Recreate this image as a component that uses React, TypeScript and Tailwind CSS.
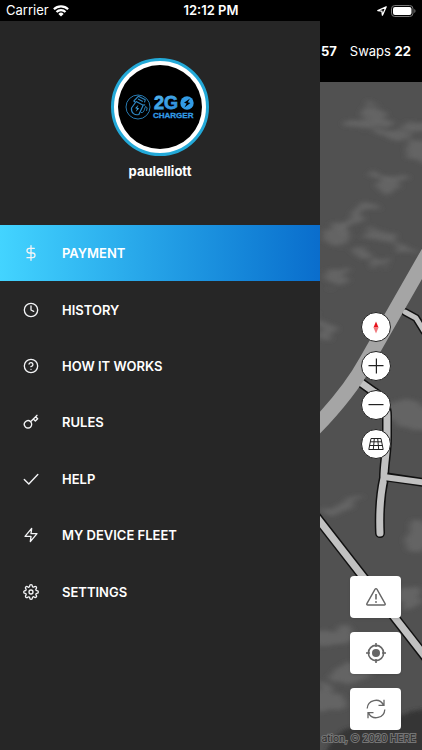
import type { ReactNode } from "react";
import {
  FiClock,
  FiDollarSign,
  FiHelpCircle,
  FiKey,
  FiSettings,
  FiZap,
} from "react-icons/fi";
import type { ComponentType } from "react";

type MenuEntry = {
  label: string;
  icon: ComponentType<{ className?: string }>;
  active?: boolean;
};

// Wider than the icon set's own tick, it fills the whole 16px box
function WideCheck({ className }: { className?: string }) {
  return (
    <svg
      viewBox="0 0 16 16"
      fill="none"
      stroke="currentColor"
      strokeWidth="1.4"
      strokeLinecap="round"
      strokeLinejoin="round"
      className={className}
    >
      <path d="m1.3 8.6 4.5 4.5 9-9.6" />
    </svg>
  );
}

const MENU: MenuEntry[] = [
  { label: "PAYMENT", icon: FiDollarSign, active: true },
  { label: "HISTORY", icon: FiClock },
  { label: "HOW IT WORKS", icon: FiHelpCircle },
  { label: "RULES", icon: FiKey },
  { label: "HELP", icon: WideCheck },
  { label: "MY DEVICE FLEET", icon: FiZap },
  { label: "SETTINGS", icon: FiSettings },
];

function StatusBar() {
  return (
    <div className="grid h-[21px] grid-cols-3 items-center bg-black px-[6px] text-[13px] leading-none text-white">
      <div className="flex items-center gap-1">
        <span>Carrier</span>
        <svg width="16" height="12" viewBox="0 0 16 12" fill="none" stroke="white" strokeWidth="2.2">
          <path d="M.9 4.3a10 10 0 0 1 14.2 0" />
          <path d="M3.5 7.1a6.3 6.3 0 0 1 9 0" />
          <path d="M8 11.6 5.4 8.9a3.7 3.7 0 0 1 5.2 0z" fill="white" stroke="none" />
        </svg>
      </div>
      <span className="text-center font-semibold whitespace-nowrap">12:12 PM</span>
      <div className="flex items-center justify-end gap-1">
        <svg width="10" height="10" viewBox="0 0 10 10" fill="none" stroke="white" strokeWidth="1.3" strokeLinejoin="round">
          <path d="M9.2.8.8 4.6l4.1.5.5 4.1z" />
        </svg>
        <svg width="25" height="12" viewBox="0 0 25 12">
          <rect x=".5" y=".5" width="21.5" height="11" rx="3.3" fill="none" stroke="#777" />
          <rect x="2" y="2" width="18.5" height="8" rx="2" fill="white" />
          <path d="M23.3 4v4c1.6-.8 1.6-3.2 0-4z" fill="#777" />
        </svg>
      </div>
    </div>
  );
}

function BrandLogo() {
  return (
    <svg viewBox="0 0 84 84" className="size-full" role="img" aria-label="2GO Charger">
      <defs>
        <linearGradient id="brand" x1="0" y1="0" x2="1" y2="1">
          <stop offset="0" stopColor="#55b9ee" />
          <stop offset="1" stopColor="#2586d8" />
        </linearGradient>
      </defs>
      <g fill="none" stroke="#2d87c4" strokeLinejoin="round">
        <circle cx="20" cy="42" r="12" strokeWidth=".9" />
        <path d="m13.5 43 4.7-6.5 7 3.8-4.3 9.2c-4 1-8-1.2-7.4-6.5z" strokeWidth="1.2" />
        <path d="m17 37-1.2-1 4.5-4.7 7 3.4-.8 2.6M20 34l4.8 2.4M25.5 39.5l1.7.7" strokeWidth="1.1" />
        <path d="M23 47.5c2 .5 3-1.2 3.5-3.3l1-2.7 1.7 1.3-.7 3.1" strokeWidth=".9" />
      </g>
      <path d="m20.5 39.8-3.4 3.4 2 .6-1.4 3 3.5-3.4-2-.6z" fill="#3da0dc" />
      <g className="font-['Liberation_Sans',sans-serif] font-bold">
        <text x="36" y="44" fill="url(#brand)" stroke="url(#brand)" strokeWidth=".8" className="text-[18px]">
          2G
        </text>
        <text x="35" y="53" fill="#329be5" stroke="#329be5" strokeWidth=".3" className="text-[8px]">
          CHARGER
        </text>
      </g>
      <circle cx="69" cy="38" r="6.7" fill="#329be5" />
      <path d="m72 33.5-6 4.2 2.6.8-2.2 4 6-4.5-2.6-.8z" fill="black" />
    </svg>
  );
}

function Drawer() {
  return (
    <aside className="w-80 shrink-0 bg-[#262626] text-white">
      <div className="flex h-51 flex-col items-center pt-[37px]">
        <div className="size-[98px] rounded-full border-3 border-[#23a9d8] bg-white p-1">
          <div className="size-full overflow-hidden rounded-full bg-black">
            <BrandLogo />
          </div>
        </div>
        <p className="mt-1 text-[13px] leading-[22px] font-bold">paulelliott</p>
      </div>
      <nav>
        <ul className="grid h-[395px] auto-rows-fr">
          {MENU.map(({ label, icon: Icon, active }) => (
            <li key={label}>
              <a
                href="#"
                aria-current={active ? "page" : undefined}
                className={`flex h-full items-center gap-[23px] pl-[23px] text-[13px] leading-[18px] font-semibold ${
                  active ? "bg-linear-to-r from-[#43d4ff] to-[#0a6dcc]" : ""
                }`}
              >
                <Icon className="size-4 text-gray-100" />
                <span>{label}</span>
              </a>
            </li>
          ))}
        </ul>
      </nav>
    </aside>
  );
}

// Clouds of lighter terrain: cx, cy, rx, ry, rotation
const TERRAIN: [number, number, number, number, number][] = [
  [377, 114, 18, 6, 30],
  [360, 124, 20, 6, -5],
  [393, 135, 18, 6, 15],
  [417, 128, 15, 5, -8],
  [421, 152, 13, 11, 30],
  [394, 182, 16, 7, -15],
  [380, 177, 10, 4, 35],
  [364, 209, 12, 5, -20],
  [336, 236, 14, 10, 0],
  [350, 224, 15, 5, -45],
  [380, 237, 18, 5, 8],
  [361, 251, 9, 4, 10],
  [378, 262, 14, 4, 0],
  [336, 277, 16, 7, -25],
  [402, 248, 16, 4, 20],
  [324, 331, 15, 7, 45],
  [410, 416, 26, 12, 10],
  [342, 504, 22, 6, -20],
  [418, 537, 12, 16, 0],
  [408, 598, 14, 12, 0],
  [332, 637, 22, 12, -20],
  [326, 700, 18, 12, 20],
  [350, 672, 22, 9, -15],
];

function Road({ d, width }: { d: string; width: number }) {
  return (
    <g fill="none" strokeLinecap="round" strokeLinejoin="round">
      <path d={d} stroke="#111" strokeWidth={width + 2} />
      <path d={d} stroke="#c1c1c1" strokeWidth={width - 1} />
    </g>
  );
}

function MapCanvas() {
  return (
    <svg
      viewBox="320 82 102 668"
      preserveAspectRatio="xMinYMin slice"
      className="absolute inset-0 size-full"
      aria-hidden="true"
    >
      <defs>
        <filter id="soft" x="-10%" y="-10%" width="120%" height="120%">
          <feTurbulence type="fractalNoise" baseFrequency=".04 .09" numOctaves="3" seed="4" />
          <feDisplacementMap in="SourceGraphic" scale="22" xChannelSelector="R" yChannelSelector="G" />
          <feGaussianBlur stdDeviation="3 2" />
        </filter>
        <filter id="hill" x="-10%" y="-10%" width="120%" height="120%">
          <feGaussianBlur stdDeviation="2" />
        </filter>
      </defs>
      <rect x="320" y="82" width="102" height="668" fill="#515151" />
      <g fill="#6e6e6e" filter="url(#soft)">
        {TERRAIN.map(([cx, cy, rx, ry, turn]) => (
          <ellipse
            key={`${cx}-${cy}`}
            cx={cx}
            cy={cy}
            rx={rx}
            ry={ry}
            opacity=".65"
            transform={`rotate(${turn} ${cx} ${cy})`}
          />
        ))}
      </g>
      <path
        d="M325 755c6-16 14-25 26-27h50c-8-8-4-12 4-14 6-3 12-4 22-5v46z"
        fill="#353535"
        filter="url(#hill)"
      />
      <Road d="m405 312 11 6 8 13" width={6} />
      <Road d="m360 382 14 10c9 6 13 14 13 24v20c0 17-3 27-3 42-4 18-5 32-4 55" width={8} />
      <path d="m387 477 40 6" fill="none" stroke="#111" strokeWidth="9" />
      <path d="m384 477 43 6" fill="none" stroke="#c1c1c1" strokeWidth="6" />
      <Road d="m315 515 112 144" width={8} />
      <path
        d="M431 248 366 362Q349 393 314 429"
        fill="none"
        stroke="#a5a5a5"
        strokeWidth="15"
      />
    </svg>
  );
}

function RoundButton({ label, children }: { label: string; children: ReactNode }) {
  return (
    <button
      type="button"
      aria-label={label}
      className="grid size-[30px] place-items-center rounded-full border border-[#222] bg-white text-[#222]"
    >
      {children}
    </button>
  );
}

function CardButton({ label, children }: { label: string; children: ReactNode }) {
  return (
    <button
      type="button"
      aria-label={label}
      className="grid h-[42px] w-[51px] place-items-center rounded-sm bg-white text-[#666] shadow-sm"
    >
      {children}
    </button>
  );
}

function MapPane() {
  return (
    <main className="flex min-w-0 flex-1 flex-col overflow-hidden">
      <header className="flex h-[61px] items-center justify-end gap-[13px] bg-black pr-[11px] text-[13px] whitespace-nowrap text-white">
        <strong className="font-bold">57</strong>
        <span>
          Swaps <strong className="font-bold">22</strong>
        </span>
      </header>
      <div className="relative flex-1">
        <MapCanvas />
        <div className="relative flex flex-col items-end pt-[230px] pr-[21px] pb-[20px]">
          <div className="flex w-[51px] flex-col items-center gap-[9px]">
            <RoundButton label="Reset north">
              <svg width="6" height="13" viewBox="0 0 6 13">
                <path d="M3 .5.5 6.5h5z" fill="#e8131b" />
                <path d="m3 12.5-2.5-6h5z" fill="#f0787c" />
              </svg>
            </RoundButton>
            <RoundButton label="Zoom in">
              <svg width="16" height="16" viewBox="0 0 16 16" stroke="currentColor" strokeWidth="1.2">
                <path d="M.5 7.6h15M8.4.5v15" />
              </svg>
            </RoundButton>
            <RoundButton label="Zoom out">
              <svg width="16" height="16" viewBox="0 0 16 16" stroke="currentColor" strokeWidth="1.2">
                <path d="M.5 7.6h15" />
              </svg>
            </RoundButton>
            <RoundButton label="Tilt map">
              <svg width="16" height="12" viewBox="0 0 16 12" fill="none" stroke="currentColor">
                <path d="M3 .5h10l2.2 11H.8zM2.3 3.8h11.4M1.6 7.5h12.8M6.3.5l-1 11M9.7.5l1 11" />
              </svg>
            </RoundButton>
          </div>
          <div className="mt-[117px] flex flex-col gap-[14px]">
            <CardButton label="Report a problem">
              <svg width="22" height="20" viewBox="0 0 22 20" fill="none" stroke="currentColor" strokeLinejoin="round">
                <path d="M10.1 2.2c.4-.8 1.4-.8 1.8 0l8.2 14.4c.4.8 0 1.4-.9 1.4H2.8c-.9 0-1.3-.6-.9-1.4z" strokeWidth="1.4" />
                <path d="M11 7v5.5" strokeWidth="1.6" />
                <circle cx="11" cy="15" r=".9" fill="currentColor" stroke="none" />
              </svg>
            </CardButton>
            <CardButton label="Find my location">
              <svg width="20" height="20" viewBox="0 0 20 20" fill="none" stroke="currentColor" strokeWidth="1.6">
                <circle cx="10" cy="10" r="7.6" />
                <circle cx="10" cy="10" r="4" fill="currentColor" stroke="none" />
                <path d="M10 0v4M10 16v4M0 10h4M16 10h4" />
              </svg>
            </CardButton>
            <CardButton label="Refresh">
              <svg width="20" height="20" viewBox="0 0 20 20" fill="none" stroke="currentColor" strokeWidth="1.3">
                <path d="M1.2 9.5a8.6 8.6 0 0 1 16.2-3.6M18 .8v5.5h-5.5" />
                <path d="M18.8 10.5a8.6 8.6 0 0 1-16.2 3.6M2 19.2v-5.5h5.5" />
              </svg>
            </CardButton>
          </div>
        </div>
        <p className="absolute right-[6px] bottom-1 text-[10px] leading-4 whitespace-nowrap text-[#2b2b2b] [paint-order:stroke] [-webkit-text-stroke:2px_#757575]">
          ation, © 2020 HERE
        </p>
      </div>
    </main>
  );
}

export default function App() {
  return (
    <div className="flex min-h-screen flex-col bg-black font-[Inter,Roboto,sans-serif]">
      <StatusBar />
      <div className="flex flex-1">
        <Drawer />
        <MapPane />
      </div>
    </div>
  );
}
